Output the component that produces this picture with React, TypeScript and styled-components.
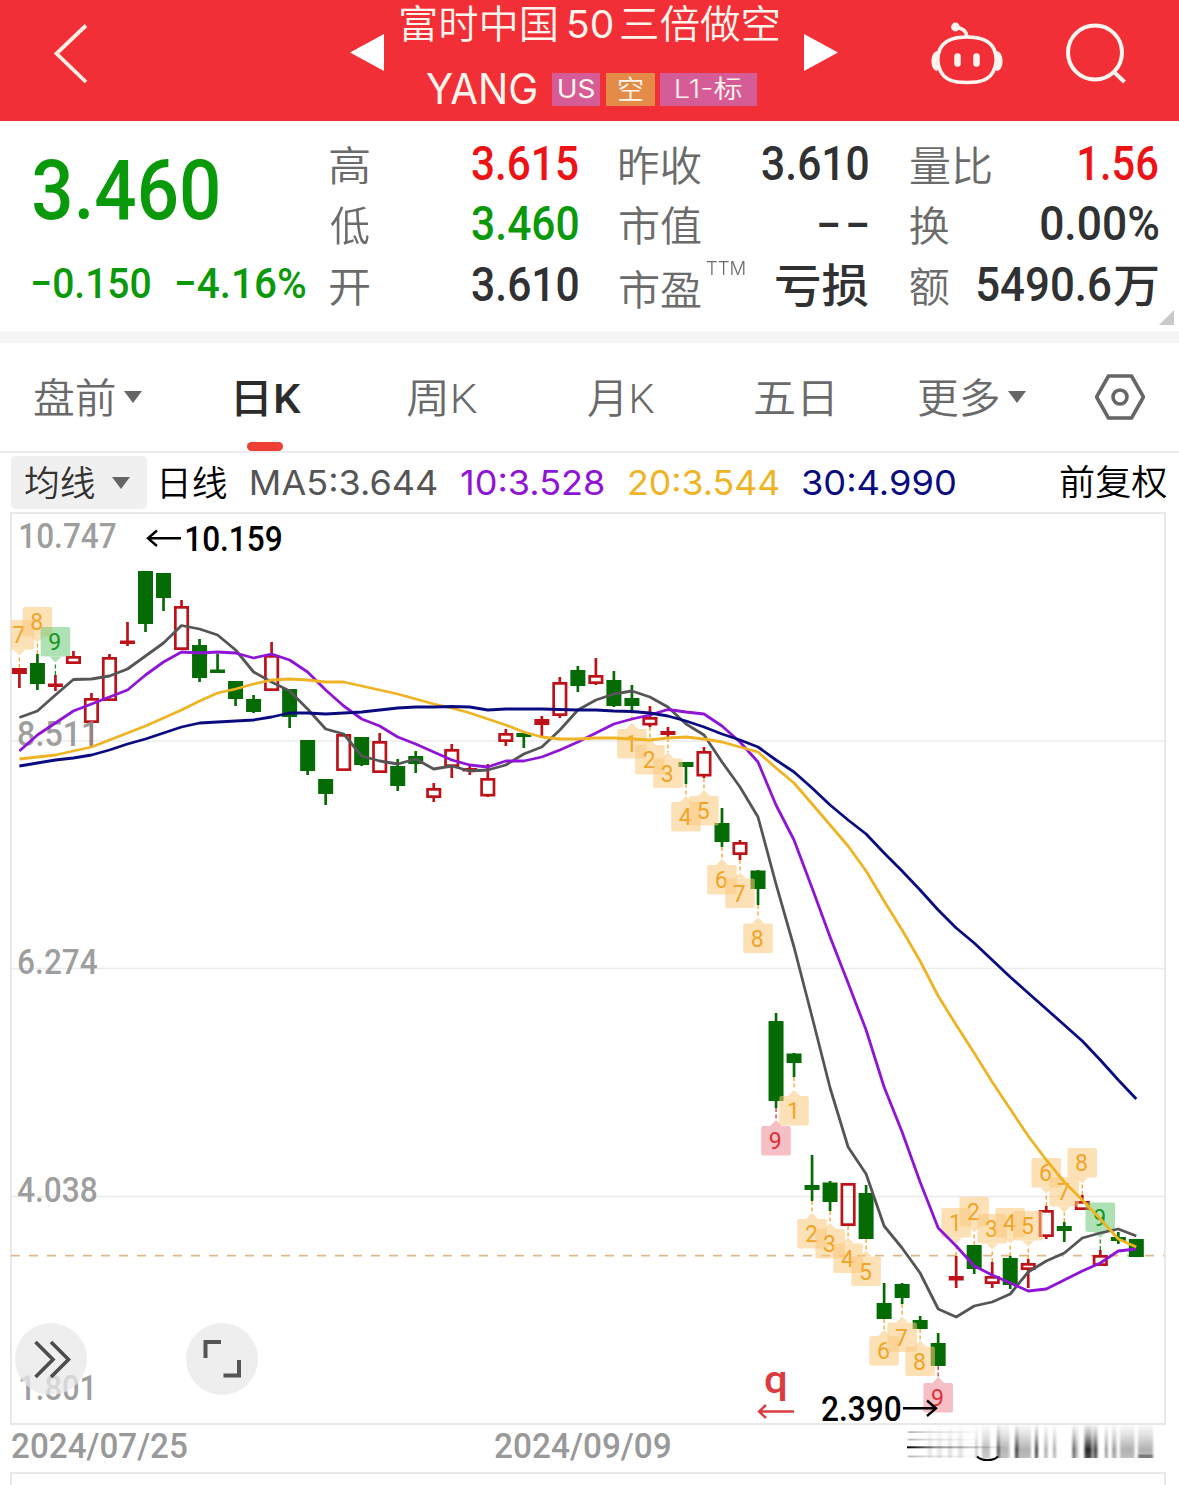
import React, { useLayoutEffect, useState } from 'react';
import styled, { createGlobalStyle } from 'styled-components';

const FONT = 'Roboto, "Noto Sans CJK SC", "Liberation Sans", sans-serif';
const ROUND = 'Inter, "Noto Sans CJK SC", "Liberation Sans", sans-serif';

const GlobalStyle = createGlobalStyle`
  * { box-sizing: border-box; }
  body { margin: 0; background: #fff; font-family: ${FONT}; overflow: hidden; }
  svg { display: block; }
`;

/* ---------- condensed text helpers ---------- */

let canvas: HTMLCanvasElement | null = null;
function inkOf(text: string, size: number, weight: number, font: string) {
  if (!canvas) canvas = document.createElement('canvas');
  const ctx = canvas.getContext('2d')!;
  ctx.font = `${weight} ${size}px ${font}`;
  const m = ctx.measureText(text);
  return { left: m.actualBoundingBoxLeft, width: m.actualBoundingBoxLeft + m.actualBoundingBoxRight };
}

type BoxProps = { $w: number; $size: number; $weight: number; $color?: string; $dy?: number; $ml?: number; $font: string };

const FitBox = styled.span<BoxProps>`
  display: block;
  flex: none;
  width: ${p => p.$w}px;
  margin-left: ${p => p.$ml ?? 0}px;
  padding-top: ${p => Math.max(0, (p.$dy ?? 0) * 2)}px;
  padding-bottom: ${p => Math.max(0, -(p.$dy ?? 0) * 2)}px;
  font-family: ${p => p.$font};
  font-size: ${p => p.$size}px;
  font-weight: ${p => p.$weight};
  line-height: 1;
  color: ${p => p.$color ?? 'inherit'};
  white-space: nowrap;
`;

const FitInner = styled.span`
  display: inline-block;
  vertical-align: top;
  line-height: 1;
  transform-origin: 0 50%;
`;

type FitProps = { text: string; w: number; size: number; weight?: number; color?: string; dy?: number; ml?: number; font?: string };

function Fit({ text, w, size, weight = 400, color, dy, ml, font = FONT }: FitProps) {
  const [t, setT] = useState('none');
  useLayoutEffect(() => {
    const ink = inkOf(text, size, weight, font);
    const k = w / ink.width;
    setT(`translateX(${ink.left * k}px) scaleX(${k})`);
  }, [text, w, size, weight, font]);
  return (
    <FitBox $w={w} $size={size} $weight={weight} $color={color} $dy={dy} $ml={ml} $font={font}>
      <FitInner style={{ transform: t }}>{text}</FitInner>
    </FitBox>
  );
}

type PlotTextProps = { text: string; x: number; w: number; y: number; size: number; weight?: number; fill: string };

function PlotText({ text, x, w, y, size, weight = 400, fill }: PlotTextProps) {
  const ink = inkOf(text, size, weight, FONT);
  const k = w / ink.width;
  return (
    <text
      transform={`translate(${x + ink.left * k} ${y}) scale(${k} 1)`}
      fontFamily={FONT}
      fontSize={size}
      fontWeight={weight}
      fill={fill}
    >
      {text}
    </text>
  );
}

/* ---------- header ---------- */

const Page = styled.div`
  width: 1179px;
  height: 1485px;
  overflow: hidden;
  display: flex;
  flex-direction: column;
  background: #fff;
`;

const Header = styled.header`
  flex: none;
  height: 121px;
  background: #f22f37;
  color: #fff5ec;
  display: grid;
  grid-template-columns: 54px 296px 34px 420px 34px 90px 76px 60px 1fr;
  align-items: start;
`;

const HeadIcon = styled.div<{ $top: number; $col: number }>`
  grid-column: ${p => p.$col};
  grid-row: 1;
  padding-top: ${p => p.$top}px;
`;

const TitleBlock = styled.div`
  grid-column: 4;
  grid-row: 1;
  padding-left: 17px;
`;

const TitleRow = styled.div`
  display: flex;
  align-items: center;
  height: 49px;
`;

const CodeRow = styled.div`
  display: flex;
  align-items: center;
  height: 33px;
  margin-top: 24px;
  padding-left: 26px;
`;

const Tag = styled.span<{ $w: number; $bg: string; $ml: number }>`
  display: flex;
  align-items: center;
  justify-content: center;
  flex: none;
  width: ${p => p.$w}px;
  height: 33px;
  margin-left: ${p => p.$ml}px;
  background: ${p => p.$bg};
`;

/* ---------- quote ---------- */

const Quote = styled.section`
  flex: none;
  position: relative;
  height: 210px;
  padding: 12px 21px 0 33px;
  display: grid;
  grid-template-columns: 255px 249px 249px 249px;
  column-gap: 41px;
`;

const PriceBlock = styled.div``;

const Line = styled.div<{ $h: number }>`
  display: flex;
  align-items: center;
  height: ${p => p.$h}px;
`;

const StatColumn = styled.div`
  padding-top: 1px;
`;

const Stat = styled.div`
  display: flex;
  align-items: center;
  justify-content: space-between;
  height: 60.5px;
`;

const LabelGroup = styled.span`
  display: flex;
  align-items: center;
  color: #6b6b6b;
`;

const ValueGroup = styled.span`
  display: flex;
  align-items: center;
`;

const Corner = styled.i`
  position: absolute;
  right: 5px;
  bottom: 6px;
  border-left: 15px solid transparent;
  border-bottom: 15px solid #c9c9c9;
`;

const Divider = styled.div`
  flex: none;
  height: 12px;
  background: #f5f5f5;
`;

/* ---------- tabs ---------- */

const Tabs = styled.nav`
  flex: none;
  height: 110px;
  border-bottom: 2px solid #ececec;
  padding-left: 34px;
  display: grid;
  grid-template-columns: 202px 171px 181px 167px 163px 177px auto;
  color: #6a6a6a;
`;

const Tab = styled.div`
  position: relative;
  display: flex;
  align-items: center;
  height: 108px;
`;

const Underline = styled.i`
  position: absolute;
  left: 11px;
  bottom: 0;
  width: 36px;
  height: 9px;
  border-radius: 4.5px;
  background: #ee3f37;
`;

const Caret = styled.i<{ $ml: number }>`
  margin-left: ${p => p.$ml}px;
  border: 9.5px solid transparent;
  border-top: 12px solid #666;
  border-bottom: 0;
`;

/* ---------- averages bar ---------- */

const Averages = styled.div`
  flex: none;
  height: 59px;
  padding-left: 11px;
  display: flex;
  align-items: center;
`;

const Picker = styled.div`
  flex: none;
  width: 136px;
  height: 53px;
  padding-left: 14px;
  border-radius: 5px;
  background: #f0f0f0;
  display: flex;
  align-items: center;
`;

/* ---------- chart ---------- */

const Panel = styled.section`
  flex: none;
  position: relative;
  margin: 0 13px 0 10px;
  height: 913px;
  border: 2px solid #e8e8e8;
`;

const Plot = styled.svg`
  overflow: visible;
`;

const RoundButton = styled.button<{ $left: number }>`
  position: absolute;
  left: ${p => p.$left}px;
  top: 809px;
  width: 72px;
  height: 72px;
  padding: 0;
  border: 0;
  border-radius: 50%;
  background: rgba(232, 232, 232, 0.75);
`;

const DateRow = styled.div`
  flex: none;
  height: 47px;
  padding-left: 12px;
  display: flex;
  align-items: flex-start;
`;

const DateCell = styled.div`
  display: flex;
  align-items: center;
  height: 42px;
`;

const NextPanel = styled.section`
  flex: none;
  height: 20px;
  margin: 0 13px 0 10px;
  border: 2px solid #e8e8e8;
  border-bottom: 0;
`;

// kind, high, body top, body bottom, low  (g = down, r = up hollow, s = thin up)
type Candle = [string, number, number, number, number];
const candles: Candle[] = [
  ['s', 668, 668, 674, 688], ['g', 654, 663, 684, 690], ['s', 675, 683.5, 687, 691], ['r', 651, 656, 664, 664],
  ['r', 693, 698, 723, 746], ['r', 654, 657, 701, 701], ['s', 622, 640.5, 644, 646], ['g', 571, 571, 624, 632],
  ['g', 573, 573, 598, 611], ['r', 600, 606, 650, 650], ['g', 639, 645, 678, 682], ['g', 654, 669.5, 673, 673],
  ['g', 681, 681, 699, 706], ['g', 695, 699, 712, 713], ['r', 642, 655, 691, 691], ['g', 689, 689, 717, 728],
  ['g', 740, 740, 771, 775], ['g', 779, 779, 794, 805], ['r', 734, 734, 771, 771], ['g', 737, 737, 765, 766],
  ['r', 733, 741, 773, 773], ['g', 759, 766, 786, 791], ['g', 751, 756, 764, 773], ['r', 783, 788, 798, 802],
  ['r', 744, 749, 767, 778], ['s', 764, 768, 771.5, 775], ['r', 764, 778, 796.5, 797], ['r', 729, 733, 742, 746],
  ['g', 733, 733, 737, 748], ['s', 716, 719, 725, 737], ['r', 677, 682, 716, 718], ['g', 666, 670, 686, 692],
  ['r', 658, 675, 684, 685], ['g', 671, 680, 706, 707], ['g', 685, 698, 706, 710], ['r', 706, 717, 725.5, 727],
  ['s', 727, 731, 735, 738], ['g', 762, 762, 767, 784], ['r', 747, 751, 776.5, 778], ['g', 808, 823, 842, 847],
  ['r', 840, 842, 855, 860], ['g', 870, 870.5, 889, 905], ['g', 1013, 1021, 1101, 1108], ['g', 1053, 1053.5, 1063, 1077],
  ['g', 1155, 1185, 1190, 1201], ['g', 1181, 1182.5, 1202, 1211], ['r', 1183, 1183, 1226, 1226], ['g', 1185, 1193, 1239, 1239],
  ['g', 1283, 1303, 1319, 1319], ['g', 1283, 1284, 1298, 1304], ['g', 1316, 1320, 1329, 1329], ['g', 1333, 1343, 1366, 1366],
  ['s', 1256, 1276, 1280.5, 1288], ['g', 1245, 1245, 1269, 1274], ['r', 1262, 1276, 1284, 1288], ['g', 1256, 1258, 1285, 1289],
  ['r', 1259, 1263, 1270, 1288], ['r', 1206, 1210, 1237, 1239], ['g', 1222, 1226, 1231, 1242], ['r', 1195, 1201, 1210, 1210],
  ['r', 1250, 1255, 1266, 1266], ['g', 1232, 1237, 1241, 1244], ['g', 1239, 1239, 1257, 1257],
];

const ma5 = [717.5, 711, 695, 679.5, 679, 676, 669, 656, 643, 625.5, 629, 635, 650, 672, 682, 691, 709, 729, 734, 756, 761, 764, 759, 769, 766, 771, 770, 765, 754, 747, 730, 710, 700, 694, 691, 697, 707, 724, 735, 762, 787, 817, 884, 947, 1017, 1088, 1147, 1174, 1226, 1248, 1273, 1309, 1317, 1306, 1302, 1294, 1272, 1261, 1253, 1238, 1233, 1229, 1236];
const ma10 = [751, 735, 723, 711, 704, 697, 690, 675, 662, 652, 653, 652, 653, 658, 654, 660, 672, 690, 706, 719, 726, 737, 744, 752, 760, 765, 767, 761, 761, 757, 750, 742, 733, 724, 719, 715, 709.5, 712, 714, 726, 742, 762, 805, 840, 888, 937, 983, 1030, 1087, 1132, 1182, 1228, 1246, 1266, 1275, 1283, 1291, 1289, 1280, 1271, 1263, 1251, 1249];
const ma20 = [759, 757, 755, 751, 747, 740, 733, 726, 718, 710, 701, 693, 689, 684, 680, 679, 680, 682, 682, 686, 690, 694, 699, 704, 708, 713, 719, 725, 732, 737, 739, 739, 738, 738, 739, 740, 738, 737, 739, 742, 747, 752, 768, 783, 804, 825, 846, 871, 901, 930, 961, 996, 1025, 1053, 1082, 1109, 1136, 1160, 1182, 1200, 1219, 1239, 1247];
const ma30 = [766, 763, 760, 758, 755, 750, 744, 739, 733, 727, 723, 722, 721, 720, 717, 713, 713, 714, 713, 712, 710, 708, 707, 707, 706.5, 707, 710, 709, 709, 709, 709.5, 710, 710, 711, 711.5, 713, 716, 721, 727, 734, 740, 747, 760, 772, 788, 805, 820, 834, 853, 871, 890, 910, 928, 943, 960, 977, 993, 1009, 1025, 1041, 1060, 1080, 1099];

// candle index, digit, box top, side of the candle
type Mark = [number, number, number, 'up' | 'down'];
const marks: Mark[] = [
  [0, 7, 620, 'up'], [1, 8, 607, 'up'], [2, 9, 627, 'up'],
  [34, 1, 729, 'down'], [35, 2, 745, 'down'], [36, 3, 758.5, 'down'], [37, 4, 802, 'down'], [38, 5, 796, 'down'],
  [39, 6, 865, 'down'], [40, 7, 878.5, 'down'], [41, 8, 923.5, 'down'], [42, 9, 1126, 'down'],
  [43, 1, 1096, 'down'], [44, 2, 1219, 'down'], [45, 3, 1229, 'down'], [46, 4, 1243.5, 'down'], [47, 5, 1256.5, 'down'],
  [48, 6, 1336, 'down'], [49, 7, 1322.5, 'down'], [50, 8, 1346.5, 'down'], [51, 9, 1383, 'down'],
  [52, 1, 1208, 'up'], [53, 2, 1197, 'up'], [54, 3, 1214, 'up'], [55, 4, 1208, 'up'], [56, 5, 1211, 'up'],
  [57, 6, 1158, 'up'], [58, 7, 1177, 'up'], [59, 8, 1148, 'up'], [60, 9, 1202.5, 'up'],
];

const cx = (i: number) => 19.4 + i * 18.015;
const poly = (v: number[]) => v.map((y, i) => `${cx(i).toFixed(1)},${y}`).join(' ');

function CandleShape({ c, i }: { c: Candle; i: number }) {
  const [kind, hi, top, bot, lo] = c;
  const x = cx(i);
  const col = kind === 'g' ? '#056b05' : '#bd1218';
  return (
    <g stroke={col} strokeWidth={2.7} fill="none">
      {hi < top && <line x1={x} x2={x} y1={hi} y2={top + 1} />}
      {lo > bot && <line x1={x} x2={x} y1={bot - 1} y2={lo} />}
      {kind === 'r' ? (
        <rect x={x - 6.2} y={top + 1.35} width={12.4} height={bot - top - 2.7} />
      ) : (
        <rect x={x - 7.5} y={top} width={15} height={bot - top} fill={col} stroke="none" />
      )}
    </g>
  );
}

function MarkShape({ m }: { m: Mark }) {
  const [i, n, top, side] = m;
  const x = cx(i);
  const nine = n === 9;
  const bg = nine ? (side === 'up' ? '#6cca78' : '#f08c96') : '#fcc97c';
  const fg = nine ? (side === 'up' ? '#14961e' : '#dc3038') : '#f0a428';
  const bottom = top + 29.5;
  const tip = side === 'up' ? bottom + 6 : top - 6;
  const end = side === 'up' ? candles[i][1] : candles[i][4];
  const tab = side === 'up'
    ? `M${x - 6} ${bottom}L${x} ${tip}L${x + 6} ${bottom}Z`
    : `M${x - 6} ${top}L${x} ${tip}L${x + 6} ${top}Z`;
  const gap = side === 'up' ? end > tip : tip > end;
  return (
    <g>
      {gap && <line x1={x} x2={x} y1={end} y2={tip} stroke={fg} strokeWidth={1.3} strokeDasharray="4 2.5" />}
      <g fill={bg} opacity={0.55}>
        <path d={tab} />
        <rect x={x - 14.8} y={top} width={29.6} height={29.5} rx={2} />
      </g>
      <text x={x - 0.7} y={top + 23} textAnchor="middle" fontFamily={FONT} fontSize={23} fill={fg}>{n}</text>
    </g>
  );
}

const axis = [
  { text: '10.747', x: 20, w: 96, y: 548 },
  { text: '8.511', x: 18, w: 76, y: 746 },
  { text: '6.274', x: 18, w: 80, y: 974 },
  { text: '4.038', x: 17, w: 80, y: 1202 },
  { text: '1.801', x: 20, w: 72, y: 1400 },
];

function Chart() {
  return (
    <Plot width={1152} height={909} viewBox="12 514 1152 909">
      <clipPath id="frame"><rect x={11} y={514} width={1154} height={909} /></clipPath>
      {[741, 968.5, 1196.5].map(y => (
        <line key={y} x1={12} x2={1164} y1={y} y2={y} stroke="#ebebeb" strokeWidth={1.6} />
      ))}
      <line x1={11} x2={1164} y1={1255.7} y2={1255.7} stroke="#dcb98a" strokeWidth={1.7} strokeDasharray="9 9" />
      {candles.map((c, i) => <CandleShape key={i} c={c} i={i} />)}
      {axis.map(a => <PlotText key={a.text} {...a} size={35} weight={500} fill="rgba(145,145,145,0.88)" />)}
      <g clipPath="url(#frame)">{marks.map(m => <MarkShape key={m[0]} m={m} />)}</g>
      <g fill="none" strokeWidth={2.8} strokeLinejoin="round">
        <polyline points={poly(ma5)} stroke="#555" />
        <polyline points={poly(ma10)} stroke="#8f14d6" />
        <polyline points={poly(ma20)} stroke="#efb424" />
        <polyline points={poly(ma30)} stroke="#0b0b80" />
      </g>
      <g fill="none" stroke="#000" strokeWidth={2.4}>
        <path d="M181 538.3H148M157 530.5L148 538.3L157 546" />
        <path d="M903 1408.3H936M927 1400.5L936 1408.3L927 1416" />
        <path d="M794 1411.5H759M766 1405L759 1411.5L766 1418" stroke="#dc3b40" />
      </g>
      <PlotText text="10.159" x={186} w={95} y={551} size={35} weight={500} fill="#000" />
      <PlotText text="2.390" x={822} w={79} y={1420.5} size={35} weight={500} fill="#000" />
      <PlotText text="q" x={765} w={21} y={1393} size={38} weight={500} fill="#dc3b40" />
    </Plot>
  );
}

// x, width, strength of the smeared columns at the right end of the date row
const smear: [number, number, number][] = [
  [21, 4, 0.1], [30, 5, 0.1], [41, 4, 0.13], [51, 5, 0.12], [68.5, 2, 0.3], [75, 8, 0.28], [90, 2.6, 0.8], [92.5, 10, 0.32],
  [108, 3.4, 0.85], [111.5, 12.5, 0.34], [128, 3, 0.85], [137.5, 3, 0.4], [146, 3, 0.35], [165.5, 2.8, 0.75], [168.5, 3, 0.3],
  [177.5, 7, 0.95], [184.5, 3, 0.4], [187, 3.5, 0.8], [198, 2.6, 0.5], [205, 4.5, 0.4], [213, 14.5, 0.34], [231, 15, 0.34],
];

function Smear() {
  return (
    <svg width={248} height={38} viewBox="0 0 248 38">
      <defs>
        <linearGradient id="down" x1="0" y1="0" x2="0" y2="1">
          <stop offset="0" stopColor="#000" stopOpacity="0.06" />
          <stop offset="0.3" stopColor="#000" stopOpacity="0.35" />
          <stop offset="0.75" stopColor="#000" stopOpacity="0.9" />
          <stop offset="1" stopColor="#000" stopOpacity="0.75" />
        </linearGradient>
        <linearGradient id="across" x1="0" y1="0" x2="1" y2="0">
          <stop offset="0" stopColor="#000" stopOpacity="1" />
          <stop offset="0.3" stopColor="#000" stopOpacity="0.4" />
          <stop offset="1" stopColor="#000" stopOpacity="0.03" />
        </linearGradient>
        <filter id="soft" x="-0.05" y="-0.1" width="1.1" height="1.2"><feGaussianBlur stdDeviation="0.8 0.4" /></filter>
      </defs>
      <g filter="url(#soft)">
        {smear.map(([x, w, o]) => <rect key={x} x={x} y={0} width={w} height={33} fill="url(#down)" opacity={o} />)}
        <rect x={1} y={6.2} width={70} height={1.8} fill="url(#across)" opacity={0.3} />
        <rect x={1} y={13.7} width={70} height={1.8} fill="url(#across)" opacity={0.3} />
        <rect x={1} y={30.5} width={70} height={1.8} fill="url(#across)" opacity={0.3} />
        <rect x={231} y={29.5} width={15} height={3.5} fill="#000" opacity={0.35} />
      </g>
      <rect x={0} y={21.3} width={100} height={2} fill="url(#across)" />
      <path d="M70 31.5C75 36.3 86 36.3 91 31.5" fill="none" stroke="#000" strokeWidth={2} />
    </svg>
  );
}

const SmearCell = styled.div`
  margin-left: 237px;
`;

const INK = '#303133';
const RED = '#ec1215';
const GREEN = '#0a990a';

export default function App() {
  const cjk = (text: string, w: number, dy = 3) => <Fit text={text} w={w} size={41} weight={350} ml={0.7} dy={dy} />;
  const num = (text: string, w: number, color = INK) => <Fit text={text} w={w} size={47.5} weight={500} color={color} />;
  return (
    <Page>
      <GlobalStyle />
      <Header>
        <HeadIcon $col={2} $top={23}>
          <svg width={36} height={62} viewBox="54 23 36 62" fill="none" stroke="#ffeee4" strokeWidth={3.8}>
            <path d="M86 25.5L56.5 53.5L86 82" />
          </svg>
        </HeadIcon>
        <HeadIcon $col={3} $top={34}>
          <svg width={34} height={38}><path d="M34 0V37L0 18.5Z" fill="#fff" /></svg>
        </HeadIcon>
        <TitleBlock>
          <TitleRow>
            <Fit text="富时中国" w={155} size={39} weight={350} dy={1.2} />
            <Fit text="50" w={44} size={38.5} weight={400} ml={12} font={ROUND} />
            <Fit text="三倍做空" w={158} size={39} weight={350} ml={9} dy={1.2} />
          </TitleRow>
          <CodeRow>
            <Fit text="YANG" w={109} size={42} weight={400} font={ROUND} dy={-0.5} />
            <Tag $w={48} $bg="#d65c98" $ml={16}><Fit text="US" w={35} size={25.5} weight={400} font={ROUND} dy={-0.5} /></Tag>
            <Tag $w={49} $bg="#e48b47" $ml={6}><Fit text="空" w={24} size={26} weight={350} /></Tag>
            <Tag $w={97} $bg="#d65c98" $ml={5}><Fit text="L1-标" w={66} size={25.5} weight={350} font={ROUND} dy={-0.5} /></Tag>
          </CodeRow>
        </TitleBlock>
        <HeadIcon $col={5} $top={34}>
          <svg width={34} height={38}><path d="M0 0V37L34 18.5Z" fill="#fff" /></svg>
        </HeadIcon>
        <HeadIcon $col={7} $top={18}>
          <svg width={76} height={70} viewBox="928 18 76 70" fill="none" stroke="#fff5f0" strokeWidth={3.7}>
            <path d="M967 37C982 37 990 41 994 49C997 56 997 64 993.5 71C989 80 981 82.5 967 82.5S945 80 940.5 71C937 64 937 56 940 49C944 41 952 37 967 37Z" />
            <path d="M938 53C932.5 55 932.5 67 938 69M996 53C1001.5 55 1001.5 67 996 69" strokeWidth={5} />
            <path d="M967 37C966.5 31 963 28 956 27.5" />
            <circle cx={955.5} cy={27} r={4.4} fill="#fff5f0" stroke="none" />
            <path d="M957.5 56.5V63.5M976.5 56.5V63.5" strokeWidth={6.5} strokeLinecap="round" />
          </svg>
        </HeadIcon>
        <HeadIcon $col={9} $top={20}>
          <svg width={66} height={66} viewBox="1064 20 66 66" fill="none" stroke="#fff5f0" strokeWidth={4}>
            <circle cx={1095} cy={52.5} r={27} />
            <path d="M1113 71L1124.5 82" />
          </svg>
        </HeadIcon>
      </Header>

      <Quote>
        <PriceBlock>
          <Line $h={115}><Fit text="3.460" w={184} size={84} weight={500} color={GREEN} ml={1} /></Line>
          <Line $h={70}>
            <Fit text="−0.150" w={117} size={42} weight={500} color={GREEN} dy={0.5} />
            <Fit text="−4.16%" w={129} size={42} weight={500} color={GREEN} ml={27} dy={0.5} />
          </Line>
        </PriceBlock>
        <StatColumn>
          <Stat><LabelGroup>{cjk('高', 39)}</LabelGroup>{num('3.615', 106, RED)}</Stat>
          <Stat><LabelGroup>{cjk('低', 39)}</LabelGroup>{num('3.460', 106, GREEN)}</Stat>
          <Stat><LabelGroup>{cjk('开', 39)}</LabelGroup>{num('3.610', 106)}</Stat>
        </StatColumn>
        <StatColumn>
          <Stat><LabelGroup>{cjk('昨收', 81)}</LabelGroup>{num('3.610', 106)}</Stat>
          <Stat><LabelGroup>{cjk('市值', 81)}</LabelGroup>
            <ValueGroup><Fit text="–" w={20} size={47} weight={500} color={INK} /><Fit text="–" w={20} size={47} weight={500} color={INK} ml={9} /></ValueGroup>
          </Stat>
          <Stat>
            <LabelGroup>{cjk('市盈', 81, 6.7)}<Fit text="TTM" w={39} size={18} weight={300} ml={5} dy={-16} font={ROUND} /></LabelGroup>
            <Fit text="亏损" w={92} size={46} weight={500} color={INK} dy={0.5} />
          </Stat>
        </StatColumn>
        <StatColumn>
          <Stat><LabelGroup>{cjk('量比', 81)}</LabelGroup>{num('1.56', 79, RED)}</Stat>
          <Stat><LabelGroup>{cjk('换', 39)}</LabelGroup>{num('0.00%', 117)}</Stat>
          <Stat><LabelGroup>{cjk('额', 39)}</LabelGroup>
            <ValueGroup>{num('5490.6', 134)}<Fit text="万" w={44} size={46} weight={500} color={INK} ml={3} dy={0.5} /></ValueGroup>
          </Stat>
        </StatColumn>
        <Corner />
      </Quote>
      <Divider />

      <Tabs>
        <Tab><Fit text="盘前" w={81} size={40.5} weight={350} dy={2.7} /><Caret $ml={9} /></Tab>
        <Tab><Fit text="日K" w={65} size={40.5} weight={500} color="#2b2b2b" dy={2.7} /><Underline /></Tab>
        <Tab><Fit text="周K" w={70} size={40.5} weight={350} dy={2.7} /></Tab>
        <Tab><Fit text="月K" w={66} size={40.5} weight={350} dy={2.7} /></Tab>
        <Tab><Fit text="五日" w={77} size={40.5} weight={350} dy={2.7} /></Tab>
        <Tab><Fit text="更多" w={81} size={40.5} weight={350} dy={2.7} /><Caret $ml={9} /></Tab>
        <Tab>
          <svg width={50} height={48} viewBox="0 0 50 48" fill="none" stroke="#666" strokeWidth={3.6} strokeLinejoin="round">
            <path d="M13.5 3H36.5L48.5 24L36.5 45H13.5L1.5 24Z" />
            <circle cx={25} cy={24} r={7} />
          </svg>
        </Tab>
      </Tabs>

      <Averages>
        <Picker><Fit text="均线" w={70} size={35.5} weight={350} color="#333" dy={2.2} /><Caret $ml={17} /></Picker>
        <Fit text="日线" w={65} size={35.5} weight={350} color="#000" ml={15} dy={2.2} />
        <Fit text="MA5:3.644" w={185} size={34.5} weight={400} color="#555" ml={25} dy={0.7} font={ROUND} />
        <Fit text="10:3.528" w={143} size={34.5} weight={400} color="#8f14d6" ml={24} dy={0.7} font={ROUND} />
        <Fit text="20:3.544" w={150} size={34.5} weight={400} color="#efb424" ml={25} dy={0.7} font={ROUND} />
        <Fit text="30:4.990" w={152} size={34.5} weight={400} color="#0b0b80" ml={24} dy={0.7} font={ROUND} />
        <Fit text="前复权" w={107} size={35.5} weight={350} color="#000" ml={105} dy={1.7} />
      </Averages>

      <Panel>
        <Chart />
        <RoundButton $left={3}>
          <svg width={72} height={72} viewBox="15.5 1323 72 72" fill="none" stroke="#4d4d4d" strokeWidth={3.6}>
            <path d="M36 1342L53.5 1359.5L36 1377M51.5 1342L69 1359.5L51.5 1377" />
          </svg>
        </RoundButton>
        <RoundButton $left={174}>
          <svg width={72} height={72} viewBox="186 1323 72 72" fill="none" stroke="#555" strokeWidth={4}>
            <path d="M205.5 1358V1342H221M223.5 1375.5H239V1360" />
          </svg>
        </RoundButton>
      </Panel>

      <DateRow>
        <DateCell>
          <Fit text="2024/07/25" w={175} size={35} weight={500} color="#999" />
          <Fit text="2024/09/09" w={175} size={35} weight={500} color="#999" ml={308} />
        </DateCell>
        <SmearCell><Smear /></SmearCell>
      </DateRow>
      <NextPanel />
    </Page>
  );
}
